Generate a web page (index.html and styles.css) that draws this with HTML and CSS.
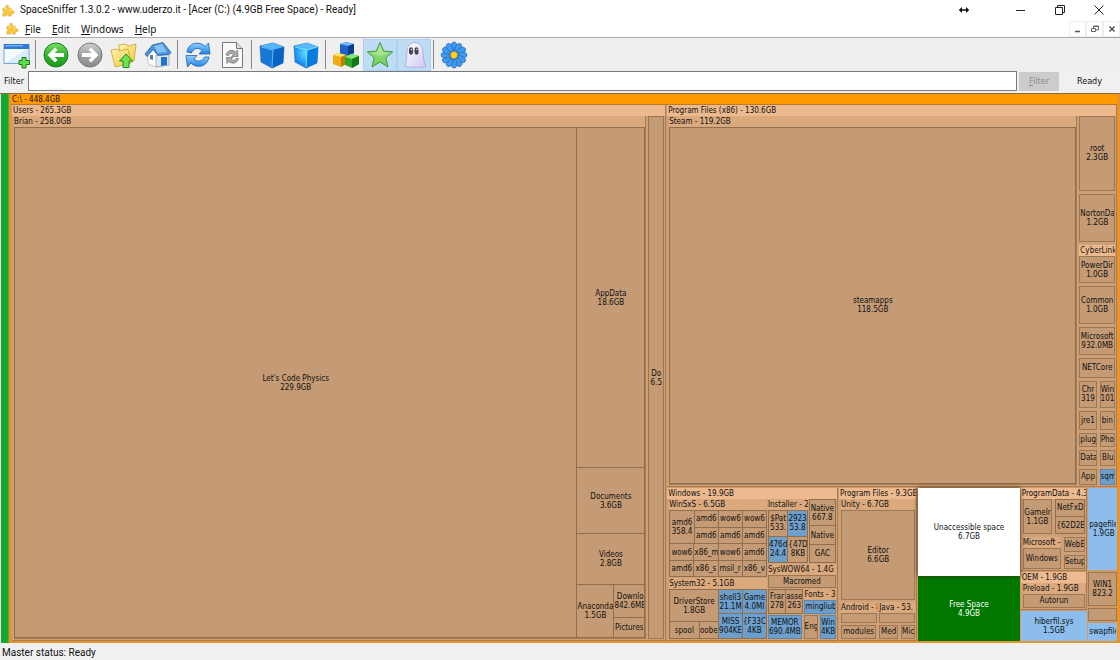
FILE: index.html
```html
<!DOCTYPE html>
<html lang="en">
<head>
<meta charset="utf-8">
<title>SpaceSniffer 1.3.0.2</title>
<link rel="stylesheet" href="styles.css">
</head>
<body>
<svg class="defs" aria-hidden="true">
  <defs>
    <linearGradient id="gGreen" x1="0" y1="0" x2="0" y2="1"><stop offset="0" stop-color="#7ddc62"/><stop offset=".5" stop-color="#2db52b"/><stop offset="1" stop-color="#1d9a1f"/></linearGradient>
    <linearGradient id="gGrey" x1="0" y1="0" x2="0" y2="1"><stop offset="0" stop-color="#d0d0d0"/><stop offset=".5" stop-color="#a2a2a2"/><stop offset="1" stop-color="#8c8c8c"/></linearGradient>
    <linearGradient id="gFolder" x1="0" y1="0" x2="1" y2="1"><stop offset="0" stop-color="#fff3a8"/><stop offset="1" stop-color="#efc945"/></linearGradient>
    <linearGradient id="gBlue" x1="0" y1="0" x2="0" y2="1"><stop offset="0" stop-color="#8ed0ff"/><stop offset="1" stop-color="#2384e6"/></linearGradient>
    <linearGradient id="gGhost" x1="0" y1="0" x2="1" y2="1"><stop offset="0" stop-color="#fff"/><stop offset="1" stop-color="#cfc8f0"/></linearGradient>
    <linearGradient id="gStar" x1="0" y1="0" x2="0" y2="1"><stop offset="0" stop-color="#a4e48a"/><stop offset="1" stop-color="#6fce58"/></linearGradient>
    <radialGradient id="gGlow" cx=".5" cy=".4"><stop offset="0" stop-color="#5fe0ff"/><stop offset="1" stop-color="#1787ec"/></radialGradient>
    <ellipse id="petal" cx="14" cy="5.500" rx="2.900" ry="4.500" fill="#3f9bf0" stroke="#175fb4" stroke-width=".6"/>
    <symbol id="puzzle" viewBox="0 0 14 14"><path d="M1 4.500h3C2.800 1.500 6.800 0 7 2.500c0 1-.8 1.300-.3 2H10v3c3-1.300 4.300 2.500 1.500 3-1 0-1.300-.8-1.500-.3V13H6.800c.8-2-2.500-2.200-2 0H1V9.800c2 .6 2.200-2.300 0-2z" fill="#f6c73b" stroke="#d9a83c" stroke-width=".7"/><path d="M2 5.500h3.500M8 5.500h1.200v3" fill="none" stroke="#ffe994"/></symbol>
  </defs>
</svg>

<header class="titlebar">
  <svg class="appicon" aria-hidden="true"><use href="#puzzle"/></svg>
  <h1 class="title">SpaceSniffer 1.3.0.2 - www.uderzo.it - [Acer (C:) (4.9GB Free Space) - Ready]</h1>
  <div class="wincontrols">
    <button class="winbtn" aria-label="Resize"><svg width="12" height="8" viewBox="0 0 12 8"><path d="M2 4h8" stroke="#111" stroke-width="1.500"/><path d="M4 1v6L.8 4zM8 1v6l3.200-3z" fill="#111"/></svg></button>
    <button class="winbtn" aria-label="Minimize"><svg width="10" height="10"><path d="M0 5.500h9" stroke="#222"/></svg></button>
    <button class="winbtn" aria-label="Restore"><svg width="10" height="10" fill="none" stroke="#222"><path d="M.5 2.500h7v7h-7zM2.500 2.500v-2h7v7h-2"/></svg></button>
    <button class="winbtn" aria-label="Close"><svg width="10" height="10"><path d="M.5.5l9 9M9.500.5l-9 9" stroke="#222"/></svg></button>
  </div>
</header>

<nav class="menubar">
  <svg class="appicon" aria-hidden="true"><use href="#puzzle"/></svg>
  <button class="menu"><u>F</u>ile</button>
  <button class="menu"><u>E</u>dit</button>
  <button class="menu"><u>W</u>indows</button>
  <button class="menu"><u>H</u>elp</button>
  <div class="mdi">
    <button class="mdibtn" aria-label="Minimize view"><svg width="8" height="8"><path d="M1 6.500h5" stroke="#555" stroke-width="1.500"/></svg></button>
    <button class="mdibtn" aria-label="Restore view"><svg width="8" height="8" fill="none" stroke="#666"><path d="M.5 3.500h4v3h-4zM2.500 3V1h5v4h-2.500M2.500 1.500h5"/></svg></button>
    <button class="mdibtn" aria-label="Close view"><svg width="8" height="8"><path d="M1.500 1.500l5 5M6.500 1.500l-5 5" stroke="#555" stroke-width="1.500"/></svg></button>
  </div>
</nav>

<div class="toolbar" role="toolbar">
  <button class="tool" aria-label="New view"><svg viewBox="0 0 28 28"><rect x="1" y="3.500" width="25" height="19" fill="#f5faff" stroke="#71a7dc"/><path d="M1 3h25v5H1z" fill="#2d79d3"/><path d="M2 4h18v1.500H2z" fill="#70b1f2"/><path d="M2 22l20-13h3v13z" fill="#dcecfb"/><path d="M19 16.500h4v3h3.500v4H23V27h-4v-3.500h-3v-4h3z" fill="#64dc50" stroke="#167d17"/></svg></button>
  <span class="sep"></span>
  <button class="tool" aria-label="Back"><svg viewBox="0 0 28 28"><circle cx="14" cy="14" r="12" fill="url(#gGreen)" stroke="#16841b"/><path d="M13 6.500L5.500 14l7.500 7.500 2.500-2.500-3-3H22v-4h-9.500l3-3z" fill="#fff"/></svg></button>
  <button class="tool" aria-label="Forward"><svg viewBox="0 0 28 28"><circle cx="14" cy="14" r="12" fill="url(#gGrey)" stroke="#777"/><path d="M15 6.500l7.500 7.500-7.500 7.500-2.500-2.500 3-3H6v-4h9.500l-3-3z" fill="#fff"/></svg></button>
  <button class="tool" aria-label="Parent folder"><svg viewBox="0 0 28 28"><path d="M9 4l7-1 2 2 8-2-2 17-14 3z" fill="url(#gFolder)" stroke="#c9a133" stroke-width=".8"/><path d="M1 9l6-1 2 2 9-2 3 14-16 4z" fill="url(#gFolder)" stroke="#c9a133" stroke-width=".8"/><path d="M16 13l6.500 7H19v6.500h-6V20H9.500z" fill="#6ee34f" stroke="#218b1c"/></svg></button>
  <button class="tool" aria-label="Home"><svg viewBox="0 0 28 28"><path d="M4 13l6-5 8 5v12l-6 1-8-3z" fill="#fff" stroke="#a8b0ba" stroke-width=".7"/><path d="M12 14l13-1v11l-13 2z" fill="#dfe7f0" stroke="#8d9bab" stroke-width=".7"/><path d="M1 13L8.500 4 19 1.500l8 10-2 2-11 1-5-6-6 7z" fill="#4a94dc" stroke="#24568f" stroke-width=".8"/><path d="M10 5l8-2 5 8-9 1z" fill="#83c0f4"/><path d="M17 16h6v8l-6 1z" fill="#1e75d2"/><path d="M6 14h3v5l-3-1z" fill="#54799b"/></svg></button>
  <span class="sep"></span>
  <button class="tool" aria-label="Rescan"><svg viewBox="0 0 28 28"><path d="M3 11C4 4 10 1 16 2.500c2.500.5 4 2 5 3L24.500 2 26 13l-11 0 3-3.500C14 6 9.500 7 7.500 12z" fill="url(#gBlue)" stroke="#1c62b4" stroke-width=".8"/><path d="M25 16c-1 7-7 10.500-13 9-2.500-.5-4-2-5-3L3.500 26 2 14.500l11 0L10 18c4 3.500 8.500 2.500 10.500-2z" fill="url(#gBlue)" stroke="#1c62b4" stroke-width=".8"/></svg></button>
  <button class="tool" aria-label="Refresh file"><svg viewBox="0 0 28 28"><path d="M4.500 1.500h14l6 6v19h-20z" fill="#fafafa" stroke="#777"/><path d="M18.500 1.500v6h6" fill="#ddd" stroke="#777"/><path d="M8 14c1-5 7-6 9.500-3l2-2 .5 6.500h-6.500l2-2c-2-2-4-1-5 1zM20.500 17.500c-1 5-7 6-9.500 3l-2 2-.5-6h6.500l-2 1.500c2 2 4 1.500 5-.5z" fill="#aaa" stroke="#666" stroke-width=".6"/></svg></button>
  <span class="sep"></span>
  <button class="tool" aria-label="Less detail"><svg viewBox="0 0 28 28"><path d="M2 5l13-3 11 4-1 16-11 5-11-6z" fill="#1878d8" stroke="#125ba9" stroke-width=".6"/><path d="M2 5l13-3 11 4-11 3z" fill="#56b5f8"/><path d="M15 9l11-3-1 16-11 5z" fill="#0b64c4"/><path d="M3 6l12 3-1 17" fill="none" stroke="#6ec8ff" stroke-width=".8"/></svg></button>
  <button class="tool" aria-label="More detail"><svg viewBox="0 0 28 28"><path d="M2 5l13-3 11 4-1 16-11 5-11-6z" fill="url(#gGlow)" stroke="#1264b9" stroke-width=".6"/><path d="M2 5l13-3 11 4-11 3z" fill="#58b8fb"/><path d="M15 9l11-3-1 16-11 5z" fill="#087bdf"/><path d="M3 6l12 3-1 17M15 9l10-3" fill="none" stroke="#80eaff" stroke-width=".9"/></svg></button>
  <span class="sep"></span>
  <button class="tool" aria-label="File classes"><svg viewBox="0 0 28 28"><path d="M8 3l6-2 8 2v9l-6 3-8-2z" fill="#1d62c0"/><path d="M8 3l6-2 8 2-6 2z" fill="#75b7ff"/><path d="M16 5l6-2v9l-6 3z" fill="#0c3d8c"/><path d="M1 14l5-2 8 2v9l-5 3-8-3z" fill="#f0ad15"/><path d="M1 14l5-2 8 2-5 2z" fill="#ffe16e"/><path d="M9 16l5-2v9l-5 3z" fill="#c27f06"/><path d="M13 16l6-3 8 2v8l-7 4-7-3z" fill="#2ea82c"/><path d="M13 16l6-3 8 2-7 3z" fill="#86e46e"/><path d="M20 18l7-3v8l-7 4z" fill="#117818"/></svg></button>
  <button class="tool on" aria-label="Show free space" aria-pressed="true"><svg viewBox="0 0 28 28"><path d="M14 1.500l3.700 8.500 9 .8-6.900 6 2.200 9.200-8-5-8 5 2.200-9.200-6.900-6 9-.8z" fill="url(#gStar)" stroke="#439547" stroke-linejoin="round"/><path d="M14 4.500l2.800 7 6 .5-8.800 3-9-3 6-.5z" fill="#b9ecaa" opacity=".6"/></svg></button>
  <button class="tool on" aria-label="Show unaccessible space" aria-pressed="true"><svg viewBox="0 0 28 28"><path d="M7 10C7.500 4.500 11 1.500 15 1.500s7.500 3 8 9c.3 6 .5 10 3 15-2 1.500-3 .5-4.500 0-2 1.500-3.500 1.500-5 .3-2 1-3.500.8-5-.2-2 1-4 1-6.500-.3C6.500 21 6.800 15 7 10z" fill="url(#gGhost)" stroke="#a49bc9" stroke-width=".7"/><ellipse cx="11" cy="10" rx="2.100" ry="3.800" fill="#47444f"/><ellipse cx="16.500" cy="10" rx="2.100" ry="3.800" fill="#47444f"/><circle cx="11.500" cy="8.500" r=".7" fill="#fff"/><circle cx="17" cy="8.500" r=".7" fill="#fff"/></svg></button>
  <span class="sep"></span>
  <button class="tool" aria-label="About"><svg viewBox="0 0 28 28"><use href="#petal"/><use href="#petal" transform="rotate(30 14 14)"/><use href="#petal" transform="rotate(60 14 14)"/><use href="#petal" transform="rotate(90 14 14)"/><use href="#petal" transform="rotate(120 14 14)"/><use href="#petal" transform="rotate(150 14 14)"/><use href="#petal" transform="rotate(180 14 14)"/><use href="#petal" transform="rotate(210 14 14)"/><use href="#petal" transform="rotate(240 14 14)"/><use href="#petal" transform="rotate(270 14 14)"/><use href="#petal" transform="rotate(300 14 14)"/><use href="#petal" transform="rotate(330 14 14)"/><circle cx="14" cy="14" r="5" fill="#2274cf"/><circle cx="14" cy="14" r="3.500" fill="#ffd529" stroke="#c78c0b" stroke-width=".8"/></svg></button>
</div>

<form class="filterbar">
  <label for="filter">Filter</label>
  <input id="filter" class="filterbox" type="text">
  <button class="filterbtn" type="button" disabled><u>F</u>ilter</button>
  <output class="ready">Ready</output>
</form>

<main class="map">
  <section class="drive">
    <h2 class="cap drivecap">C:\ - 448.4GB</h2>
    <div class="row roots">
      <section class="group frame" style="flex-grow:655">
        <h3 class="cap">Users - 265.3GB</h3>
        <div class="row gap2 inset">
          <section class="group dim frame" style="flex-grow:635">
            <h4 class="cap">Brian - 258.0GB</h4>
            <div class="row packed">
              <div class="tile" style="flex-grow:563">Let's Code Physics<br>229.9GB</div>
              <div class="col packed0" style="flex-grow:67">
                <div class="tile" style="flex-grow:340">AppData<br>18.6GB</div>
                <div class="tile" style="flex-grow:65">Documents<br>3.6GB</div>
                <div class="tile" style="flex-grow:50">Videos<br>2.8GB</div>
                <div class="row packed0" style="flex-grow:52">
                  <div class="tile" style="flex-grow:36">Anaconda<br>1.5GB</div>
                  <div class="col packed0" style="flex-grow:30">
                    <div class="tile" style="flex-grow:32">Downlo<br>842.6MB</div>
                    <div class="tile" style="flex-grow:19">Pictures</div>
                  </div>
                </div>
              </div>
            </div>
          </section>
          <div class="tile" style="flex-grow:14">Do<br>6.5</div>
        </div>
      </section>

      <div class="col rest" style="flex-grow:451">
        <section class="group frame" style="flex-grow:380">
          <h3 class="cap">Program Files (x86) - 130.6GB</h3>
          <div class="row gap2 inset">
            <section class="group dim frame" style="flex-grow:411">
              <h4 class="cap">Steam - 119.2GB</h4>
              <div class="row packed"><div class="tile" style="flex-grow:1">steamapps<br>118.5GB</div></div>
            </section>
            <div class="col gap3" style="flex-grow:36">
              <div class="tile" style="flex-grow:75">root<br>2.3GB</div>
              <div class="tile" style="flex-grow:48">NortonDa<br>1.2GB</div>
              <section class="group" style="flex-grow:39"><h4 class="cap">CyberLink</h4><div class="tile" style="flex-grow:1">PowerDir<br>1.0GB</div></section>
              <div class="tile" style="flex-grow:37">Common<br>1.0GB</div>
              <div class="tile" style="flex-grow:27">Microsoft<br>932.0MB</div>
              <div class="tile" style="flex-grow:18">NETCore</div>
              <div class="row gap3" style="flex-grow:28"><div class="tile" style="flex-grow:17">Chr<br>319</div><div class="tile" style="flex-grow:15">Win<br>101</div></div>
              <div class="row gap3" style="flex-grow:20"><div class="tile" style="flex-grow:17">jre1</div><div class="tile" style="flex-grow:15">bin</div></div>
              <div class="row gap3" style="flex-grow:14"><div class="tile" style="flex-grow:17">plug</div><div class="tile" style="flex-grow:15">Pho</div></div>
              <div class="row gap3" style="flex-grow:17"><div class="tile" style="flex-grow:18">Data</div><div class="tile" style="flex-grow:14">Blu</div></div>
              <div class="row gap3" style="flex-grow:16"><div class="tile" style="flex-grow:17">App</div><div class="tile file" style="flex-grow:15">sqm</div></div>
            </div>
          </div>
        </section>

        <div class="row gap1" style="flex-grow:153">
          <section class="group frame" style="flex-grow:171">
            <h3 class="cap">Windows - 19.9GB</h3>
            <div class="row gap1 inset">
              <div class="col gap1" style="flex-grow:99">
                <section class="group dim" style="flex-grow:78">
                  <h4 class="cap">WinSxS - 6.5GB</h4>
                  <div class="col packed">
                    <div class="row packed0" style="flex-grow:33">
                      <div class="tile" style="flex-grow:24">amd6<br>358.4</div>
                      <div class="col packed0" style="flex-grow:72">
                        <div class="row packed0" style="flex-grow:1"><div class="tile" style="flex-grow:1">amd6</div><div class="tile" style="flex-grow:1">wow6</div><div class="tile" style="flex-grow:1">wow6</div></div>
                        <div class="row packed0" style="flex-grow:1"><div class="tile" style="flex-grow:1">amd6</div><div class="tile" style="flex-grow:1">amd6</div><div class="tile" style="flex-grow:1">amd6</div></div>
                      </div>
                    </div>
                    <div class="row packed0" style="flex-grow:16"><div class="tile" style="flex-grow:1">wow6</div><div class="tile" style="flex-grow:1">x86_m</div><div class="tile" style="flex-grow:1">wow6</div><div class="tile" style="flex-grow:1">amd6</div></div>
                    <div class="row packed0" style="flex-grow:15"><div class="tile" style="flex-grow:1">amd6</div><div class="tile" style="flex-grow:1">x86_s</div><div class="tile" style="flex-grow:1">msil_r</div><div class="tile" style="flex-grow:1">x86_v</div></div>
                  </div>
                </section>
                <section class="group dim" style="flex-grow:61">
                  <h4 class="cap">System32 - 5.1GB</h4>
                  <div class="row packed">
                    <div class="col packed0" style="flex-grow:49">
                      <div class="tile" style="flex-grow:32">DriverStore<br>1.8GB</div>
                      <div class="row packed0" style="flex-grow:16"><div class="tile" style="flex-grow:29">spool</div><div class="tile" style="flex-grow:19">oobe</div></div>
                    </div>
                    <div class="col packed0" style="flex-grow:48">
                      <div class="row packed0" style="flex-grow:1"><div class="tile file" style="flex-grow:1">shell3<br>21.1M</div><div class="tile file" style="flex-grow:1">Game<br>4.0MI</div></div>
                      <div class="row packed0" style="flex-grow:1"><div class="tile file" style="flex-grow:1">MISS<br>904KE</div><div class="tile file" style="flex-grow:1">{F33C<br>4KB</div></div>
                    </div>
                  </div>
                </section>
              </div>
              <div class="col gap1" style="flex-grow:69">
                <div class="row gap1" style="flex-grow:64">
                  <section class="group dim" style="flex-grow:41">
                    <h4 class="cap">Installer - 2</h4>
                    <div class="col packed">
                      <div class="row packed0" style="flex-grow:1"><div class="tile" style="flex-grow:1">$Pat<br>533.</div><div class="tile file" style="flex-grow:1">2923<br>53.8</div></div>
                      <div class="row packed0" style="flex-grow:1"><div class="tile file" style="flex-grow:1">476d<br>24.4</div><div class="tile" style="flex-grow:1">{47D<br>8KB</div></div>
                    </div>
                  </section>
                  <div class="col packed" style="flex-grow:26">
                    <div class="tile" style="flex-grow:26">Native<br>667.8</div>
                    <div class="tile" style="flex-grow:18">Native</div>
                    <div class="tile" style="flex-grow:17">GAC</div>
                  </div>
                </div>
                <section class="group dim" style="flex-grow:24">
                  <h4 class="cap">SysWOW64 - 1.4G</h4>
                  <div class="tile" style="flex-grow:1">Macromed</div>
                </section>
                <div class="row gap1" style="flex-grow:25">
                  <div class="row packed" style="flex-grow:35"><div class="tile" style="flex-grow:1">Frar<br>278</div><div class="tile" style="flex-grow:1">asse<br>263</div></div>
                  <section class="group dim" style="flex-grow:33"><h4 class="cap">Fonts - 3</h4><div class="tile file" style="flex-grow:1">mingliub</div></section>
                </div>
                <div class="row gap2" style="flex-grow:24">
                  <div class="tile file" style="flex-grow:36">MEMOR<br>690.4MB</div>
                  <div class="tile" style="flex-grow:14">Eng</div>
                  <div class="tile file" style="flex-grow:16">Win<br>4KB</div>
                </div>
              </div>
            </div>
          </section>

          <section class="group frame" style="flex-grow:78">
            <h3 class="cap">Program Files - 9.3GB</h3>
            <div class="col gap2 inset">
              <section class="group dim" style="flex-grow:101"><h4 class="cap">Unity - 6.7GB</h4><div class="tile" style="flex-grow:1">Editor<br>6.6GB</div></section>
              <div class="row gap2" style="flex-grow:21">
                <section class="group dim" style="flex-grow:1"><h4 class="cap">Android - 8</h4><div class="tile" style="flex-grow:1"></div></section>
                <section class="group dim" style="flex-grow:1"><h4 class="cap">Java - 53.</h4><div class="tile" style="flex-grow:1"></div></section>
              </div>
              <div class="row gap3" style="flex-grow:14"><div class="tile" style="flex-grow:37">modules</div><div class="tile" style="flex-grow:18">Med</div><div class="tile" style="flex-grow:14">Mic</div></div>
            </div>
          </section>

          <div class="col special" style="flex-grow:102">
            <div class="tile unaccessible" style="flex-grow:89">Unaccessible space<br>6.7GB</div>
            <div class="tile free" style="flex-grow:65">Free Space<br>4.9GB</div>
          </div>

          <div class="col gap1" style="flex-grow:67">
            <section class="group frame" style="flex-grow:85">
              <h3 class="cap">ProgramData - 4.3</h3>
              <div class="col gap3 inset">
                <div class="row gap3" style="flex-grow:36">
                  <div class="tile" style="flex-grow:30">GameIr<br>1.1GB</div>
                  <div class="col packed" style="flex-grow:30"><div class="tile" style="flex-grow:1">NetFxD</div><div class="tile" style="flex-grow:1">{62D2E</div></div>
                </div>
                <div class="row gap3" style="flex-grow:32">
                  <section class="group dim" style="flex-grow:39"><h4 class="cap">Microsoft -</h4><div class="tile" style="flex-grow:1">Windows</div></section>
                  <div class="col gap3" style="flex-grow:22"><div class="tile" style="flex-grow:1">WebE</div><div class="tile" style="flex-grow:1">Setup</div></div>
                </div>
              </div>
            </section>
            <section class="group frame" style="flex-grow:38">
              <h3 class="cap">OEM - 1.9GB</h3>
              <div class="col inset"><section class="group dim" style="flex-grow:1"><h4 class="cap">Preload - 1.9GB</h4><div class="tile" style="flex-grow:1">Autorun</div></section></div>
            </section>
            <div class="tile bigfile" style="flex-grow:29">hiberfil.sys<br>1.5GB</div>
          </div>

          <div class="col gap2" style="flex-grow:29">
            <div class="tile bigfile" style="flex-grow:85">pagefile<br>1.9GB</div>
            <div class="tile" style="flex-grow:33">WIN1<br>823.2</div>
            <div class="tile" style="flex-grow:12"></div>
            <div class="tile bigfile" style="flex-grow:17">swapfile</div>
          </div>
        </div>
      </div>
    </div>
  </section>
</main>

<footer class="status">Master status: Ready</footer>
</body>
</html>
```
FILE: styles.css
```css
* { box-sizing: border-box; }

html, body { height: 100%; margin: 0; }

body {
  display: flex;
  flex-direction: column;
  background: #f0f0f0;
  color: #111;
  font: 10px/14px Roboto, "Noto Sans", sans-serif;
  overflow: hidden;
}

h1, h2, h3, h4 { margin: 0; font: inherit; }
button { font: inherit; color: inherit; padding: 0; border: 0; background: none; }
.defs { position: absolute; width: 0; height: 0; }

.titlebar, .menubar { display: flex; align-items: center; background: #fff; flex: none; }
.titlebar { height: 20px; padding-left: 2px; }
.menubar { height: 18px; padding-left: 6px; border-bottom: 1px solid #aaa; font-family: "Noto Sans", sans-serif; }
.appicon { width: 13px; height: 13px; }
.title { margin-left: 5px; line-height: 20px; white-space: nowrap; }
.wincontrols { display: flex; margin-left: auto; height: 17px; padding-right: 2px; }
.winbtn { width: 39px; display: grid; place-items: center; }
.winbtn:first-child { width: 57px; padding-right: 18px; }
.menu { margin-left: 6px; margin-right: 5px; }
.mdi { display: flex; margin-left: auto; }
.mdibtn { width: 17px; height: 16px; display: grid; place-items: center; border: 1px solid #eee; }

.toolbar { display: flex; flex: none; height: 33px; padding: 1px 0 0 1px; background: #efefef; }
.tool { width: 34px; display: grid; place-items: center; }
.tool:first-child { width: 32px; }
.tool svg { width: 28px; height: 28px; }
.tool.on { background: #bfdcf5; border: 1px solid #abd0f0; }
.sep { width: 4px; margin: 1px 0 2px 2px; border-left: 1px solid #888; }

.filterbar {
  display: flex;
  flex: none;
  align-items: flex-start;
  height: 22px;
  padding-left: 4px;
  font: 9px/21px "DejaVu Sans Condensed", sans-serif;
}
.filterbar label { width: 24px; }
.filterbox { flex: 1; min-width: 0; height: 20px; border: 1px solid #7a7a7a; background: #fff; padding: 0 4px; font: inherit; }
.filterbtn { width: 40px; height: 19px; margin: 1px 0 0 2px; line-height: 19px; background: #ccc; color: #8e8e8e; }
.ready { width: 61px; text-align: center; }

/* treemap: every box takes a share of its parent by flex-grow */
.map {
  flex: 1;
  min-height: 0;
  display: flex;
  padding-left: 1px;
  border-top: 1px solid #8a6a3c;
  font: 8px/9px "DejaVu Sans Condensed", "DejaVu Sans", sans-serif;
}
.map::before { content: ""; width: 7px; background: #12aa2c; border-right: 1px solid #6d9e2c; }
.drive {
  flex: 1;
  min-width: 0;
  display: flex;
  flex-direction: column;
  background: #d09a66;
  border: solid #e8942c;
  border-width: 0 3px 2px 2px;
}
.row, .col, .group { display: flex; flex: 1 1 0; min-width: 0; min-height: 0; }
.col, .group { flex-direction: column; }
.roots { gap: 1px; padding-left: 1px; }
.rest { gap: 1px; }
.gap1 { gap: 1px; }
.gap2 { gap: 2px; }
.gap3 { gap: 3px; }
.packed { gap: 1px; padding: 1px; background: #916e4c; }
.packed0 { gap: 1px; background: #916e4c; }
.inset { padding: 0 1px 1px 2px; }

.group { background: #cda077; }
.frame { border: solid #a77c52; border-width: 0 1px 1px 0; }
.cap {
  flex: none;
  height: 11px;
  padding-left: 1px;
  line-height: 12px;
  background: #ecba8e;
  white-space: nowrap;
  overflow: hidden;
}
.dim > .cap { padding-left: 0; background: #daa97d; }
.drivecap { background: #ff9900; border-bottom: 1px solid #b97a2c; }

.tile {
  flex: 1 1 0;
  min-width: 0;
  min-height: 0;
  display: grid;
  align-content: center;
  justify-content: safe center;
  background: #c49b75;
  border: 1px solid #9b7753;
  white-space: nowrap;
  text-align: center;
  overflow: hidden;
}
.packed > .tile, .packed0 > .tile { border: 0; }
.file { background: #6d9fcd; border-color: #5c86ad; }
.bigfile { background: #8cbdec; border-color: #8cbdec; }
.special { z-index: 1; }
.unaccessible { background: #fff; border: 0; box-shadow: 0 0 4px #3a2a18; z-index: 1; }
.free { background: #007800; border: 0; color: #fff; }

.status { flex: none; height: 17px; padding-left: 2px; line-height: 20px; }
```
